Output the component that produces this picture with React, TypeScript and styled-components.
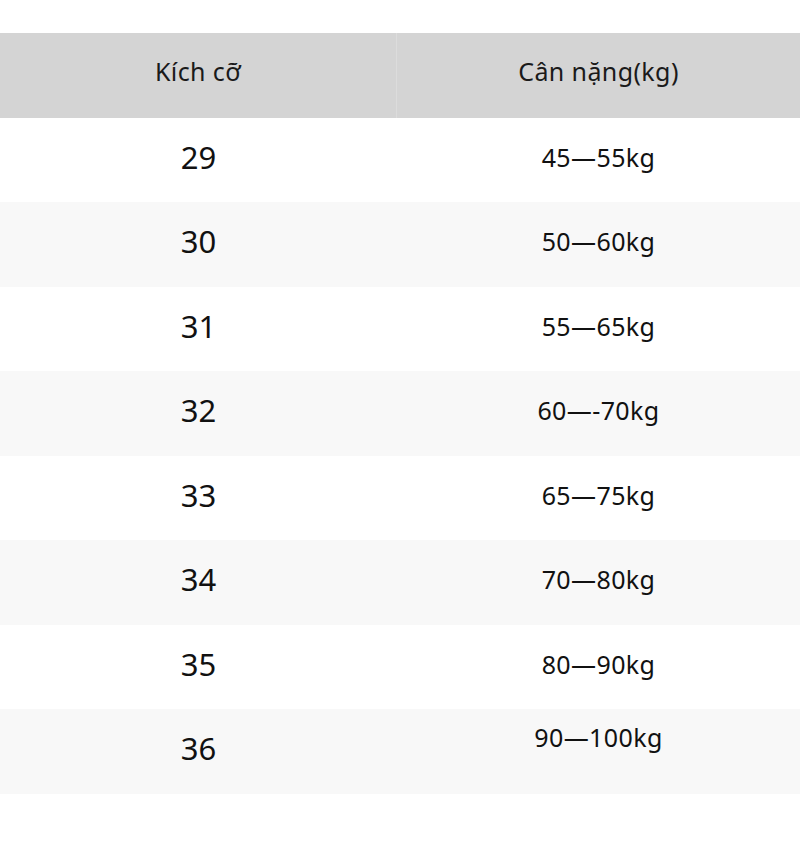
import React from 'react';
import styled, { createGlobalStyle } from 'styled-components';

const GlobalStyle = createGlobalStyle`
    body {
        margin: 0;
        background: #ffffff;
        font-family: "Noto Sans", "Open Sans", sans-serif;
        color: #111111;
    }
`;

const Page = styled.div`
    padding-top: 33px;
    width: 800px;
`;

const Table = styled.div`
    display: grid;
    grid-template-columns: 397px 403px;
    grid-auto-rows: 84.5px;
`;

const HeadCell = styled.div<{ $divider?: boolean }>`
    display: flex;
    align-items: center;
    justify-content: center;
    background: #d4d4d4;
    font-size: 25px;
    letter-spacing: 0.4px;
    color: #1a1a1a;
    border-right: ${(p) => (p.$divider ? '1px solid #dcdcdc' : 'none')};
    padding-bottom: 8px;
    box-sizing: border-box;
`;

const Cell = styled.div<{ $shade: boolean; $big?: boolean; $raise?: number }>`
    display: flex;
    align-items: center;
    justify-content: center;
    background: ${(p) => (p.$shade ? '#f8f8f8' : '#ffffff')};
    font-size: ${(p) => (p.$big ? '31px' : '25px')};
    letter-spacing: ${(p) => (p.$big ? '0' : '0.4px')};
    padding-bottom: ${(p) => `${6 + (p.$raise ?? 0) * 2}px`};
    box-sizing: border-box;
`;

const rows = [
    ['29', '45—55kg'],
    ['30', '50—60kg'],
    ['31', '55—65kg'],
    ['32', '60—-70kg'],
    ['33', '65—75kg'],
    ['34', '70—80kg'],
    ['35', '80—90kg'],
    ['36', '90—100kg'],
];

function App() {
    return (
        <>
            <GlobalStyle />
            <Page>
                <Table>
                    <HeadCell $divider>Kích cỡ</HeadCell>
                    <HeadCell>Cân nặng(kg)</HeadCell>
                    {rows.map(([size, weight], i) => (
                        <React.Fragment key={size}>
                            <Cell $shade={i % 2 === 1} $big>{size}</Cell>
                            <Cell $shade={i % 2 === 1} $raise={size === '36' ? 11 : 0}>
                                {weight}
                            </Cell>
                        </React.Fragment>
                    ))}
                </Table>
            </Page>
        </>
    );
}

export default App;
